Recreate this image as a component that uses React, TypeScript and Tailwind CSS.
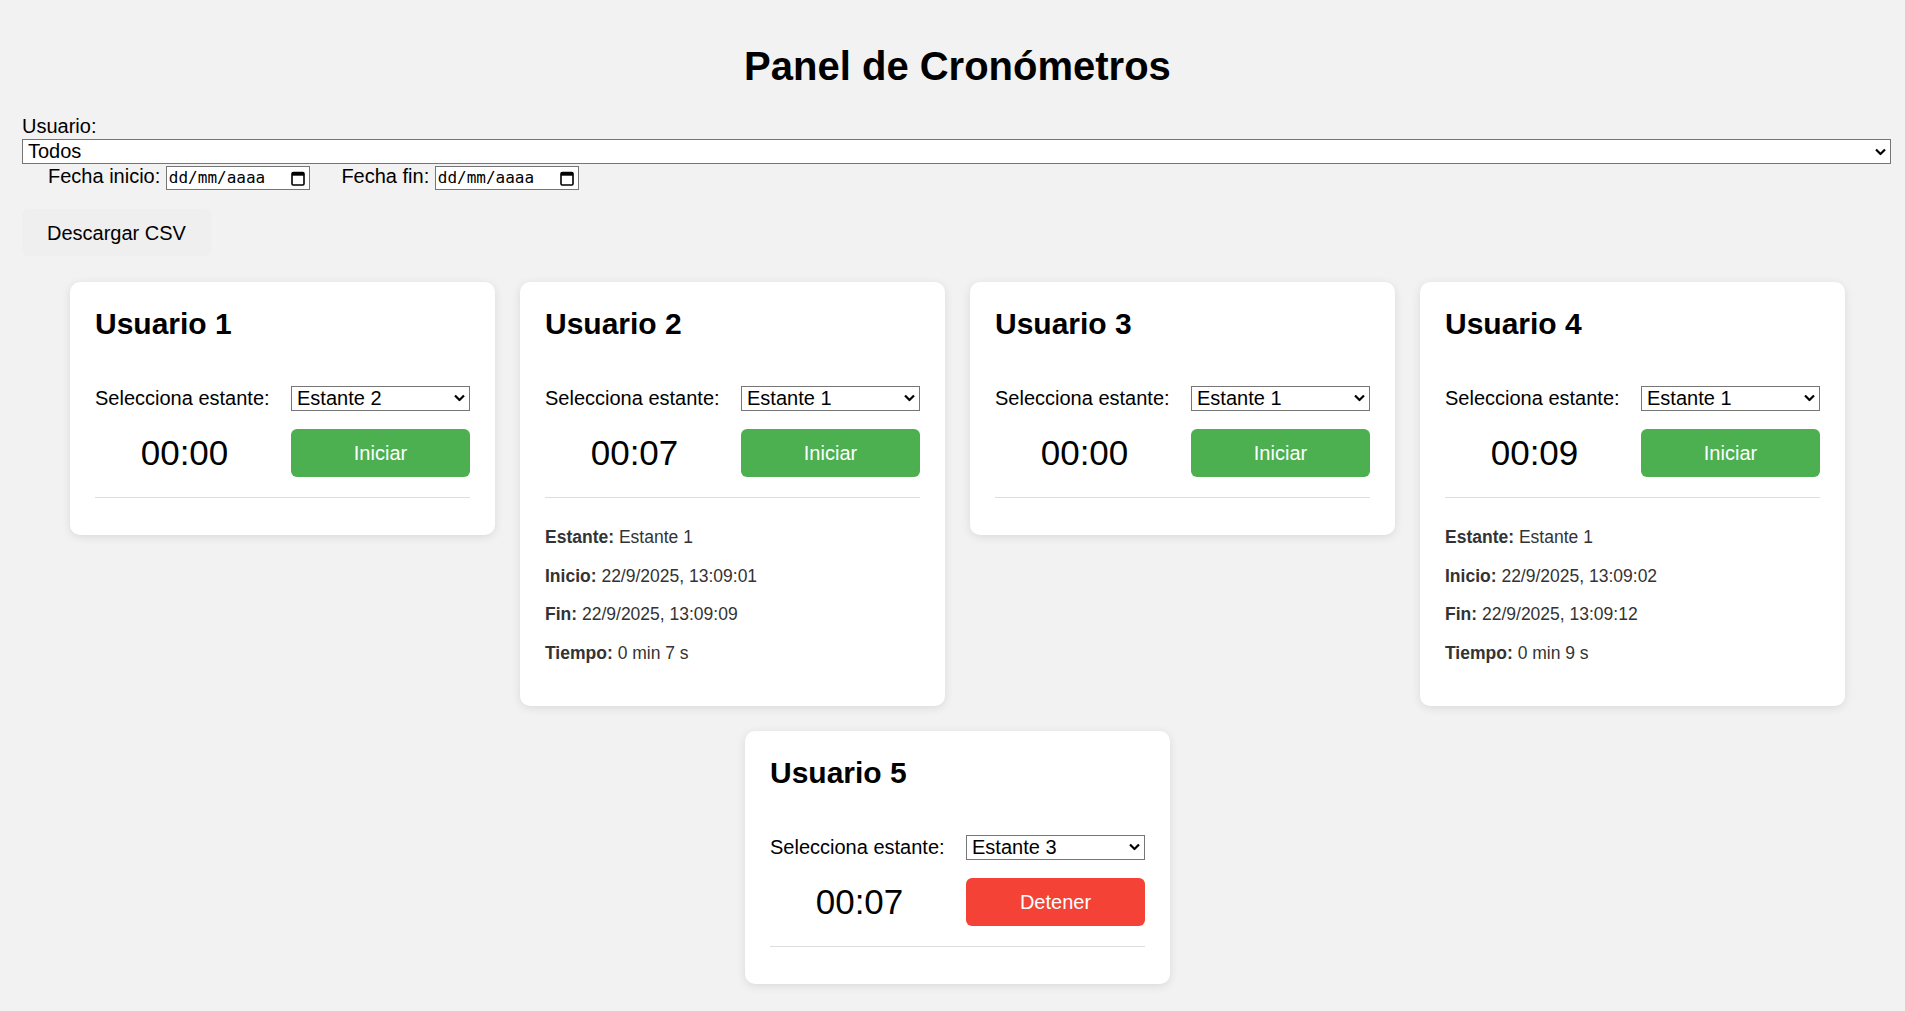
import React from "react";

const FONT = { fontFamily: '"Liberation Sans", Arial, sans-serif' };

function Chevron() {
  return (
    <svg width="11" height="7" viewBox="0 0 11 7" className="pointer-events-none absolute right-[5px] top-1/2 -translate-y-1/2">
      <path d="M1 1 L5.5 5.5 L10 1" fill="none" stroke="#000" strokeWidth="2.2" />
    </svg>
  );
}

function Select({ value, options, className }: { value: string; options: string[]; className?: string }) {
  return (
    <div className={"relative " + (className ?? "")}>
      <select
        defaultValue={value}
        className="block h-[25px] w-full appearance-none rounded-none border border-[#767676] bg-white pl-[5px] pr-[20px] text-[20px] leading-[23px] text-black outline-none"
        style={FONT}
      >
        {options.map((o) => (
          <option key={o}>{o}</option>
        ))}
      </select>
      <Chevron />
    </div>
  );
}

function CalendarIcon() {
  return (
    <svg width="14" height="15" viewBox="0 0 14 15" className="shrink-0">
      <rect x="1" y="1.5" width="12" height="12.5" rx="1.2" fill="none" stroke="#000" strokeWidth="1.6" />
      <rect x="1" y="1.5" width="12" height="3.2" fill="#000" />
    </svg>
  );
}

function DateInput() {
  return (
    <span className="inline-flex h-[24px] w-[144px] items-center justify-between border border-[#767676] bg-white pl-[2px] pr-[4px] align-baseline">
      <span className="text-[16px] leading-[20px] text-black" style={{ fontFamily: '"DejaVu Sans Mono", "Liberation Mono", monospace' }}>
        dd/mm/aaaa
      </span>
      <CalendarIcon />
    </span>
  );
}

type Detail = { estante: string; inicio: string; fin: string; tiempo: string };

type Card = {
  name: string;
  estante: string;
  time: string;
  running?: boolean;
  detail?: Detail;
};

const cards: Card[] = [
  { name: "Usuario 1", estante: "Estante 2", time: "00:00" },
  {
    name: "Usuario 2",
    estante: "Estante 1",
    time: "00:07",
    detail: { estante: "Estante 1", inicio: "22/9/2025, 13:09:01", fin: "22/9/2025, 13:09:09", tiempo: "0 min 7 s" },
  },
  { name: "Usuario 3", estante: "Estante 1", time: "00:00" },
  {
    name: "Usuario 4",
    estante: "Estante 1",
    time: "00:09",
    detail: { estante: "Estante 1", inicio: "22/9/2025, 13:09:02", fin: "22/9/2025, 13:09:12", tiempo: "0 min 9 s" },
  },
  { name: "Usuario 5", estante: "Estante 3", time: "00:07", running: true },
];

function UserCard({ c }: { c: Card }) {
  return (
    <div className="w-[425px] rounded-[10px] bg-white p-[25px] shadow-[0_2px_10px_rgba(0,0,0,0.1)]">
      <h2 className="mb-[44px] text-[30px] font-bold leading-[34.5px] text-black">{c.name}</h2>
      <div className="grid grid-cols-2 items-center gap-x-[17px] gap-y-[18px]">
        <span className="text-[20px] leading-[23px] text-black">Selecciona estante:</span>
        <Select value={c.estante} options={["Estante 1", "Estante 2", "Estante 3"]} />
        <span className="text-center text-[35px] leading-[40px] text-black">{c.time}</span>
        <button
          className={
            "h-[48px] w-full rounded-[6px] text-[20px] text-white " + (c.running ? "bg-[#f44336]" : "bg-[#4caf50]")
          }
        >
          {c.running ? "Detener" : "Iniciar"}
        </button>
      </div>
      <div className="mt-[20px] mb-[12px] h-px bg-[#dedede]" />
      {c.detail && (
        <div className="py-[17.5px] text-[17.5px] leading-[21px] text-[#333]">
          <p>
            <b>Estante:</b> {c.detail.estante}
          </p>
          <p className="mt-[17.5px]">
            <b>Inicio:</b> {c.detail.inicio}
          </p>
          <p className="mt-[17.5px]">
            <b>Fin:</b> {c.detail.fin}
          </p>
          <p className="mt-[17.5px]">
            <b>Tiempo:</b> {c.detail.tiempo}
          </p>
        </div>
      )}
    </div>
  );
}

export default function App() {
  return (
    <div className="min-h-[1011px] bg-[#f2f2f2] pl-[22px] pr-[12px] pt-[43px] pb-[20px] text-black" style={FONT}>
      <h1 className="mb-[26px] text-center text-[40px] font-bold leading-[46px]">Panel de Cronómetros</h1>
      <div className="text-[20px] leading-[23px]">Usuario:</div>
      <Select value="Todos" options={["Todos", "Usuario 1", "Usuario 2", "Usuario 3", "Usuario 4", "Usuario 5"]} className="mt-px w-[1869px]" />
      <div className="pl-[26px] text-[20px] leading-[25px]">
        <label>
          Fecha inicio: <DateInput />
        </label>{" "}
        <label className="ml-[26px]">
          Fecha fin: <DateInput />
        </label>
      </div>
      <button className="mt-[19px] h-[47px] rounded-[6px] bg-[#efefef] px-[25px] text-[20px] text-black">Descargar CSV</button>
      <div className="mt-[26px] flex flex-wrap items-start justify-center gap-[25px]">
        {cards.map((c) => (
          <UserCard key={c.name} c={c} />
        ))}
      </div>
    </div>
  );
}
